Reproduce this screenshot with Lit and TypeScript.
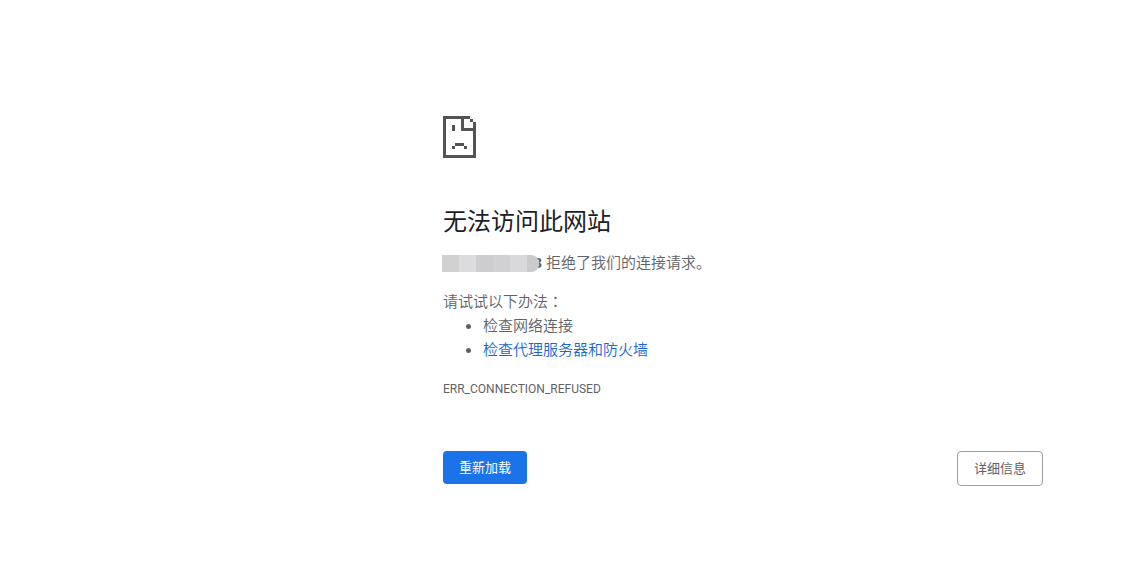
import { LitElement, html, css } from "lit";
import { customElement } from "lit/decorators.js";

@customElement("app-root")
export class AppRoot extends LitElement {
  static styles = css`
    :host {
      display: block;
      background: #fff;
      color: #5f6368;
      font-family: "Noto Sans", "Noto Sans CJK SC", sans-serif;
      font-size: 15px;
      font-weight: 350;
      line-height: 24px;
    }
    .page {
      box-sizing: border-box;
      max-width: 695px;
      margin-left: auto;
      padding: 116px 95px 90px 0;
    }
    .icon {
      display: block;
      width: 33px;
      height: 42px;
      fill: #535353;
    }
    h1 {
      margin: 47px 0 13px;
      color: #202124;
      font-size: 24px;
      font-weight: 400;
      line-height: 32px;
    }
    p {
      margin: 0;
    }
    .summary {
      display: flex;
      align-items: center;
      gap: 4px;
      margin-bottom: 15px;
    }
    .host {
      position: relative;
      box-sizing: border-box;
      width: 99px;
      text-align: right;
      font-weight: 700;
    }
    .mask {
      position: absolute;
      left: -1px;
      top: 5px;
      width: 97px;
      height: 17px;
      border-radius: 0 8px 8px 0;
      background: linear-gradient(
        90deg,
        #d2d1d2 0 17px,
        #dcdbdd 17px 34px,
        #cdcdcf 34px 51px,
        #d1d1d3 51px 68px,
        #d9d9db 68px 85px,
        #cbcbce 85px
      );
    }
    .colon {
      font-family: "Noto Sans CJK TC", sans-serif;
      line-height: 1;
    }
    ul {
      margin: 0 0 16px;
      padding: 0 0 0 40px;
    }
    a {
      color: #1967d2;
      text-decoration: none;
    }
    .code {
      font-family: Roboto, "Noto Sans", sans-serif;
      font-size: 12px;
      font-weight: 400;
    }
    .actions {
      display: flex;
      justify-content: space-between;
      align-items: flex-start;
      margin-top: 50px;
    }
    button {
      box-sizing: border-box;
      padding: 0 16px;
      border: 0;
      border-radius: 4px;
      font-family: inherit;
      font-size: 13px;
      line-height: 33px;
      cursor: pointer;
    }
    .reload {
      background: #1a73e8;
      color: #fff;
    }
    .details {
      border: 1px solid #9aa0a6;
      background: #fff;
      color: #5f6368;
    }
  `;

  render() {
    return html`
      <main class="page">
        <svg class="icon" viewBox="0 0 11 14" shape-rendering="crispEdges" aria-hidden="true">
          <path
            d="M0 0H9V1H7V4H11V14H0ZM1 1V13H10V5H6V1ZM9 1H10V2H9ZM10 2H11V4H10ZM3 3H4V5H3ZM4 9H7V10H4ZM3 10H4V11H3ZM7 10H8V11H7Z"
            fill-rule="evenodd"
          />
        </svg>
        <h1>无法访问此网站</h1>
        <p class="summary">
          <span class="host">3<span class="mask"></span></span>
          <span>拒绝了我们的连接请求。</span>
        </p>
        <p>请试试以下办法<span class="colon">：</span></p>
        <ul>
          <li>检查网络连接</li>
          <li><a href="#proxy">检查代理服务器和防火墙</a></li>
        </ul>
        <p class="code">ERR_CONNECTION_REFUSED</p>
        <div class="actions">
          <button class="reload" type="button">重新加载</button>
          <button class="details" type="button">详细信息</button>
        </div>
      </main>
    `;
  }
}
